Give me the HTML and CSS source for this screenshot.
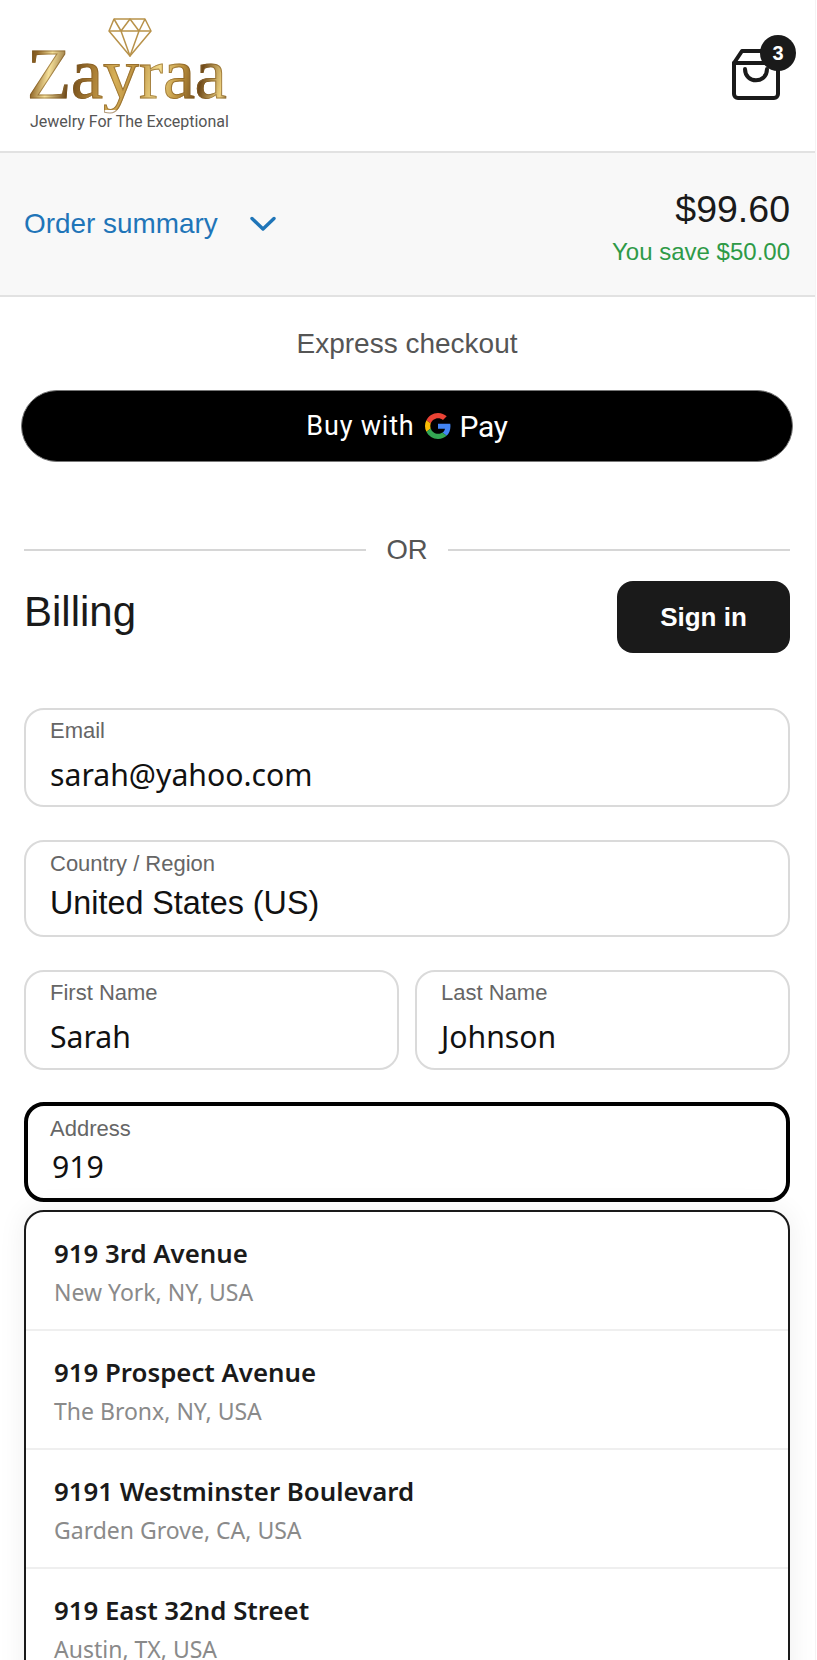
FILE: index.html
```html
<!DOCTYPE html>
<html lang="en">
<head>
<meta charset="utf-8">
<title>Checkout</title>
<link rel="stylesheet" href="styles.css">
</head>
<body>
<div class="page">
  <header class="topbar">
    <div class="logo">
      <svg class="diamond" viewBox="0 0 44 40" width="44" height="40" fill="none" stroke="#b8924a" stroke-width="1.5" stroke-linejoin="round">
        <path d="M6 1h31l6 12-21 25L1 13z"/>
        <path d="M1 13h42M6 1l7 12L22 1l9 12 6-12M13 13l9 25 9-25"/>
      </svg>
      <div class="wordmark">Zayraa</div>
      <div class="tagline">Jewelry For The Exceptional</div>
    </div>
    <div class="cart">
      <svg viewBox="0 0 48 52" width="48" height="52" fill="none" stroke="#1a1a1a" stroke-width="4" stroke-linejoin="round" stroke-linecap="round">
        <path d="M2 15 10 3h28l8 12v31a4 4 0 0 1-4 4H6a4 4 0 0 1-4-4z"/>
        <path d="M2 15h44"/>
        <path d="M13 21c0 15 22 15 22 0"/>
      </svg>
      <span class="badge">3</span>
    </div>
  </header>

  <section class="summary">
    <div class="summary-toggle">
      <span>Order summary</span>
      <svg viewBox="0 0 26 16" width="26" height="16" fill="none" stroke="#1f75b8" stroke-width="3.4" stroke-linecap="round" stroke-linejoin="round"><path d="M2 2.5 13 13 24 2.5"/></svg>
    </div>
    <div class="summary-total">
      <div class="price">$99.60</div>
      <div class="save">You save $50.00</div>
    </div>
  </section>

  <main class="content">
    <div class="express">Express checkout</div>
    <button class="gpay" type="button">
      <span class="gpay-text">Buy with</span>
      <svg viewBox="0 0 48 48" width="26" height="26">
        <path fill="#EA4335" d="M24 9.5c3.5 0 6.7 1.2 9.2 3.6l6.9-6.9C35.9 2.4 30.5 0 24 0 14.6 0 6.5 5.4 2.6 13.2l8 6.2C12.5 13.7 17.8 9.5 24 9.5z"/>
        <path fill="#4285F4" d="M47 24.5c0-1.6-.1-3.1-.4-4.5H24v9h12.9c-.6 3-2.2 5.5-4.7 7.2l7.7 6c4.5-4.2 7.1-10.3 7.1-17.7z"/>
        <path fill="#FBBC05" d="M10.6 28.6c-.5-1.4-.8-3-.8-4.6s.3-3.2.8-4.6l-8-6.2C.9 16.5 0 20.1 0 24s.9 7.5 2.6 10.8z"/>
        <path fill="#34A853" d="M24 48c6.5 0 11.9-2.1 15.9-5.8l-7.7-6c-2.2 1.4-4.9 2.3-8.2 2.3-6.2 0-11.5-4.2-13.4-9.9l-8 6.2C6.5 42.6 14.6 48 24 48z"/>
      </svg>
      <span class="gpay-pay">Pay</span>
    </button>

    <div class="divider"><span class="rule"></span><span class="or">OR</span><span class="rule"></span></div>

    <div class="billing-head">
      <h1>Billing</h1>
      <button class="signin" type="button">Sign in</button>
    </div>

    <div class="field field-email">
      <div class="label">Email</div>
      <div class="value value-alt">sarah@yahoo.com</div>
    </div>
    <div class="field field-country">
      <div class="label">Country / Region</div>
      <div class="value">United States (US)</div>
    </div>
    <div class="field-row">
      <div class="field field-name">
        <div class="label">First Name</div>
        <div class="value value-alt">Sarah</div>
      </div>
      <div class="field field-name">
        <div class="label">Last Name</div>
        <div class="value value-alt">Johnson</div>
      </div>
    </div>
    <div class="field field-focus">
      <div class="label">Address</div>
      <div class="value value-alt value-typed">919</div>
    </div>

    <ul class="suggestions">
      <li><div class="s-title">919 3rd Avenue</div><div class="s-sub">New York, NY, USA</div></li>
      <li><div class="s-title">919 Prospect Avenue</div><div class="s-sub">The Bronx, NY, USA</div></li>
      <li><div class="s-title">9191 Westminster Boulevard</div><div class="s-sub">Garden Grove, CA, USA</div></li>
      <li><div class="s-title">919 East 32nd Street</div><div class="s-sub">Austin, TX, USA</div></li>
    </ul>
  </main>
</div>
</body>
</html>
```
FILE: styles.css
```css
* { box-sizing: border-box; }
html, body { margin: 0; padding: 0; height: 1660px; overflow: hidden; background: #fff; }
body { font-family: "Liberation Sans", Arial, sans-serif; color: #1a1a1a; }
.page { width: 816px; height: 1660px; border-right: 1px solid #f6f2f4; overflow: hidden; }

.topbar { height: 153px; border-bottom: 2px solid #e2e2e2; padding: 0 35px 0 30px; display: flex; justify-content: space-between; }
.logo { position: relative; width: 200px; padding-top: 38px; }
.diamond { position: absolute; left: 78px; top: 18px; }
.wordmark { font-family: "Liberation Serif", serif; font-size: 72px; line-height: 72px; margin-left: -3px; background: linear-gradient(100deg, #5f3d12 0%, #8f6526 6%, #f5e09a 13%, #6b4617 23%, #a67a32 33%, #d7b057 44%, #b98e3e 54%, #f2da8a 64%, #c0953f 74%, #6f4a1a 84%, #ecd07e 94%, #5f3f15 100%); -webkit-background-clip: text; background-clip: text; color: transparent; -webkit-text-stroke: 1px rgba(125,85,30,.6); }
.tagline { font-family: Roboto, sans-serif; font-size: 16px; line-height: 18px; color: #555; margin-top: 3px; white-space: nowrap; }
.cart { position: relative; width: 48px; height: 52px; margin-top: 48px; }
.badge { position: absolute; left: 28px; top: -13px; width: 36px; height: 36px; border-radius: 50%; background: #1a1a1a; color: #fff; font-size: 20px; font-weight: 700; line-height: 36px; text-align: center; }

.summary { height: 144px; background: #f8f8f8; border-bottom: 2px solid #e2e2e2; padding: 0 25px 0 24px; display: flex; justify-content: space-between; align-items: center; }
.summary-toggle { display: flex; align-items: center; gap: 32px; color: #1f75b8; font-size: 27.9px; }
.summary-total { text-align: right; padding-top: 5px; }
.price { font-size: 37.5px; line-height: 44px; }
.save { font-size: 24px; line-height: 28px; margin-top: 7px; color: #2e9a47; }

.content { padding: 0 25px 0 24px; }
.express { text-align: center; font-size: 28px; line-height: 32px; color: #555; margin-top: 31px; }
.gpay { display: flex; align-items: center; justify-content: center; gap: 11px; width: 772px; height: 72px; margin: 30px 0 0 -3px; background: #000; border: 1px solid #777; border-radius: 36px; color: #fff; padding: 0; }
.gpay-text, .gpay-pay { font-family: Roboto, sans-serif; font-size: 27px; letter-spacing: 0.8px; }
.gpay-pay { margin-left: -3px; font-size: 30px; letter-spacing: -0.3px; }

.divider { display: flex; align-items: center; gap: 20px; margin-top: 72px; height: 32px; }
.rule { flex: 1; height: 2px; background: #d6d6d6; }
.or { font-size: 27.5px; color: #555; }

.billing-head { display: flex; justify-content: space-between; margin-top: 15px; height: 72px; }
h1 { font-size: 42px; line-height: 62px; font-weight: 400; margin: 0; }
.signin { width: 173px; height: 72px; border: 0; border-radius: 16px; background: #1a1a1a; color: #fff; font: 700 26px "Liberation Sans", sans-serif; padding: 0; }

.field { border: 2px solid #dadada; border-radius: 20px; padding: 9px 24px 0; background: #fff; }
.label { font-size: 22px; line-height: 25px; color: #666; }
.value { font-size: 32.3px; line-height: 40px; color: #111; margin-top: 7px; }
.value-alt { font-family: "Noto Sans", sans-serif; font-size: 30.2px; margin-top: 12px; }
.field-email { height: 99px; margin-top: 55px; padding-top: 8px; }
.field-country { height: 97px; margin-top: 33px; }
.field-row { display: flex; gap: 16px; margin-top: 33px; }
.field-name { flex: 1; height: 100px; padding-top: 8px; }
.field-focus { height: 100px; margin-top: 32px; border: 4px solid #000; padding: 10px 22px 0; }
.value-typed { padding-left: 2px; margin-top: 6px; }

.suggestions { list-style: none; margin: 8px 0 0; padding: 0; border: 2px solid #1a1a1a; border-radius: 20px 20px 0 0; background: #fff; box-shadow: 0 0 28px rgba(0,0,0,.07); }
.suggestions li { height: 119px; padding: 22px 28px 0; border-bottom: 2px solid #efefef; font-family: "Noto Sans", sans-serif; }
.s-title { font-size: 25.8px; font-weight: 600; line-height: 38px; color: #1a1a1a; }
.s-sub { font-size: 23px; line-height: 34px; color: #8a8a8a; margin-top: 3px; }
```
